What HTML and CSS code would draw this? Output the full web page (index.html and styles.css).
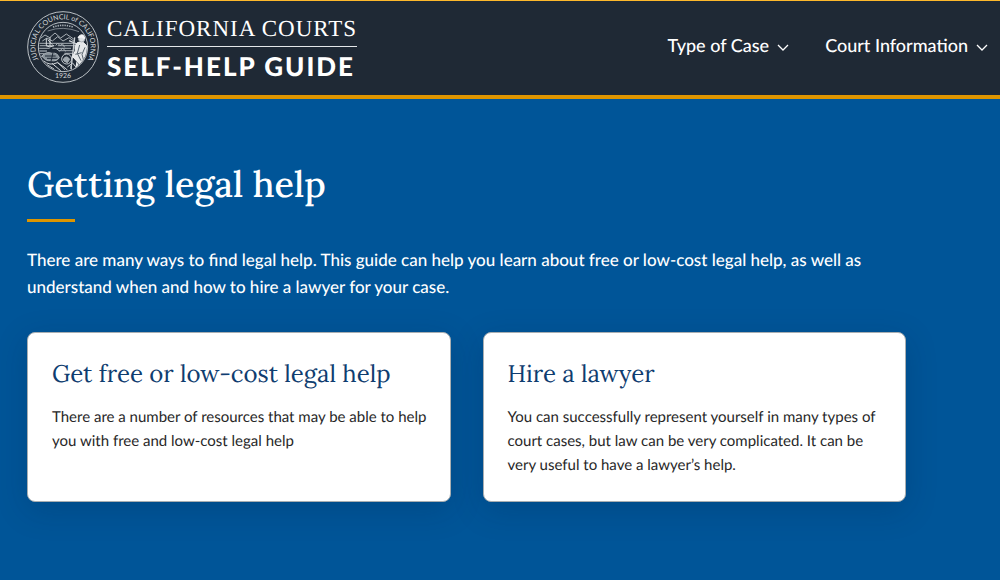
FILE: index.html
```html
<!DOCTYPE html>
<html lang="en">
<head>
<meta charset="utf-8">
<meta name="viewport" content="width=device-width, initial-scale=1">
<title>Getting legal help | California Courts Self-Help Guide</title>
<link rel="stylesheet" href="styles.css">
</head>
<body>
<header class="site-header">
  <a class="brand" href="#">
    <svg class="seal" viewBox="0 0 216 216" role="img" aria-label="Judicial Council of California seal, 1926">
      <defs>
        <path id="ring" d="M49 166 A83 83 0 1 1 167 166"/>
        <clipPath id="disc"><circle cx="108" cy="108" r="72"/></clipPath>
      </defs>
      <g fill="none" stroke="#b9bfc4">
        <circle cx="108" cy="108" r="106" stroke-width="3"/>
        <circle cx="108" cy="108" r="74" stroke-width="3"/>
      </g>
      <text class="seal-text"><textPath href="#ring" startOffset="50%" text-anchor="middle">JUDICIAL COUNCIL of CALIFORNIA</textPath></text>
      <text class="seal-text" x="108" y="201" text-anchor="middle">1926</text>
      <g clip-path="url(#disc)" fill="none" stroke="#a9b0b6" stroke-width="3">
        <path d="M78 48Q108 38 138 48" stroke-dasharray="4 3" stroke-width="5"/>
        <path d="M62 60Q108 43 156 62" stroke-width="2"/>
        <path d="M38 84L54 72L68 80L84 66L101 81L118 69L140 84M46 90L60 81L76 90L92 77L108 90L126 80L143 92"/>
        <path d="M35 97H142M38 104H82M92 104H144M36 112H68M76 112H132M35 120H60M95 119H142M35 128H52M112 127H139M38 136H49" stroke-width="4" opacity=".8"/>
        <path d="M69 78V108M58 82V103M62 86L76 101M57 104Q68 112 81 104" stroke="#d5d9dc"/>
        <path d="M86 104L92 96L99 104L106 98L113 109M88 113L98 120L107 112L117 121"/>
        <path d="M45 135Q57 120 75 127Q91 124 97 140Q89 152 73 149Q54 151 45 135Z" fill="#879199"/>
        <path d="M54 135H86M60 142H91M78 125L72 151M49 151Q66 165 93 157" stroke="#1f2935"/>
        <path d="M49 149Q68 166 91 155L112 169L122 178M60 161L81 174M75 157L102 180M91 153L114 176" stroke="#d5d9dc"/>
        <circle cx="119" cy="144" r="15" fill="#1f2935" stroke="#c5cbd0" stroke-width="3"/>
        <path d="M109 144Q119 131 128 145L121 155L111 150Z" fill="#9ea7ae"/>
        <path d="M143 79L132 174M126 89L157 102" stroke="#cbd0d4" stroke-width="4"/>
        <path d="M153 94Q141 102 145 119L137 137L150 151L146 174Q158 180 174 166L182 143Q184 116 178 103L168 94Z" fill="#e4e7e9" stroke="#f3f4f5"/>
        <circle cx="164" cy="84" r="9" fill="#dce0e3"/>
        <path d="M153 80Q160 65 176 76L173 83Q163 75 153 80Z" fill="#f3f4f5" stroke="#f3f4f5"/>
        <path d="M158 102L151 127L162 149M174 109L165 130L171 153M151 154L160 168M145 130L164 125" stroke="#57636d"/>
        <path d="M121 168L137 156L157 181M131 166L137 184" stroke="#cbd0d4"/>
      </g>
    </svg>
    <span class="wordmark">
      <span class="wordmark-top">CALIFORNIA COURTS</span>
      <span class="wordmark-bottom">SELF-HELP GUIDE</span>
    </span>
  </a>
  <nav class="main-nav" aria-label="Main">
    <button class="nav-item" type="button">Type of Case
      <svg class="chevron" viewBox="0 0 12 8" aria-hidden="true"><path d="M1 1L6 6L11 1"/></svg>
    </button>
    <button class="nav-item" type="button">Court Information
      <svg class="chevron" viewBox="0 0 12 8" aria-hidden="true"><path d="M1 1L6 6L11 1"/></svg>
    </button>
  </nav>
</header>
<main class="hero">
  <h1 class="title">Getting legal help</h1>
  <p class="intro">There are many ways to find legal help. This guide can help you learn about free or low-cost legal help, as well as understand when and how to hire a lawyer for your case.</p>
  <div class="cards">
    <article class="card">
      <h2 class="card-title"><a href="#">Get free or low-cost legal help</a></h2>
      <p class="card-text">There are a number of resources that may be able to help you with free and low-cost legal help</p>
    </article>
    <article class="card">
      <h2 class="card-title"><a href="#">Hire a lawyer</a></h2>
      <p class="card-text">You can successfully represent yourself in many types of court cases, but law can be very complicated. It can be very useful to have a lawyer’s help.</p>
    </article>
  </div>
</main>
</body>
</html>
```
FILE: styles.css
```css
* { box-sizing: border-box; }

body {
  margin: 0;
  min-height: 100vh;
  background: #005598;
  color: #fff;
  font-family: Lato, "Liberation Sans", sans-serif;
  text-rendering: geometricPrecision;
}

.site-header {
  display: flex;
  align-items: flex-start;
  justify-content: space-between;
  padding: 10px 12px 12px 27px;
  background: #1f2935;
  border-top: 1px solid #fdb82b;
  border-bottom: 4px solid #de9500;
}

.brand {
  display: flex;
  gap: 8px;
  color: #fff;
  text-decoration: none;
}

.seal { width: 72px; height: 72px; }

.seal-text {
  font-family: Lato, "Liberation Sans", sans-serif;
  font-size: 21px;
  fill: #d5d9dc;
}

.wordmark {
  display: flex;
  flex-direction: column;
  white-space: nowrap;
}

.wordmark-top {
  padding: 2px 0;
  border-bottom: 1px solid #e4e7e9;
  font-family: "Liberation Serif", serif;
  font-size: 23px;
  line-height: 31px;
  letter-spacing: 1px;
}

.wordmark-bottom {
  padding-top: 3px;
  font-size: 26px;
  font-weight: 900;
  line-height: 32px;
  letter-spacing: 2px;
}

.main-nav {
  display: flex;
  gap: 36px;
  padding-top: 22px;
}

.nav-item {
  display: flex;
  align-items: center;
  gap: 8px;
  padding: 0;
  border: 0;
  background: none;
  color: #fff;
  font: 500 18px/24px Lato, "Liberation Sans", sans-serif;
  text-rendering: inherit;
  white-space: nowrap;
}

.chevron {
  width: 12px;
  height: 8px;
  margin-top: 6px;
  fill: none;
  stroke: #fff;
  stroke-width: 1.3;
}

.hero {
  max-width: 933px;
  padding: 61px 27px 78px;
}

.title {
  margin: 0;
  font-family: Lora, "Liberation Serif", serif;
  font-size: 36px;
  font-weight: 500;
  line-height: 48px;
}

.title::after {
  content: "";
  display: block;
  width: 48px;
  height: 3px;
  margin-top: 11px;
  background: #de9500;
}

.intro {
  margin: 24px 0 32px;
  font-size: 17px;
  font-weight: 500;
  line-height: 27px;
}

.cards {
  display: grid;
  grid-template-columns: 1fr 1fr;
  gap: 32px;
}

.card {
  padding: 24px 16px 24px 24px;
  background: #fff;
  border: 1px solid #a9aeb1;
  border-radius: 8px;
  box-shadow: 0 8px 32px rgba(0, 30, 60, .18);
}

.card-title {
  margin: 0 0 14px;
  font-family: Lora, "Liberation Serif", serif;
  font-size: 24px;
  font-weight: 400;
  line-height: 34px;
}

.card-title a {
  color: #0f3d70;
  text-decoration: none;
}

.card-text {
  margin: 0;
  color: #272727;
  font-size: 15px;
  line-height: 24px;
}
```
